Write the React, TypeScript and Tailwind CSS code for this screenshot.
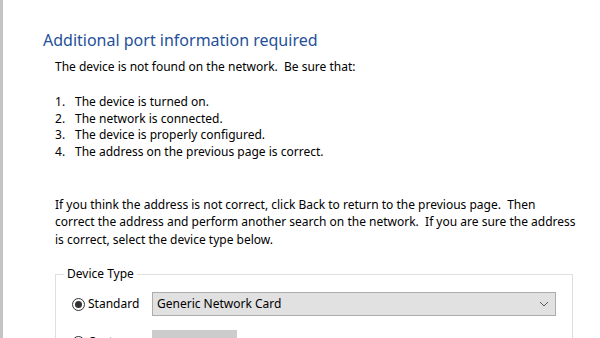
const items = [
  "The device is turned on.",
  "The network is connected.",
  "The device is properly configured.",
  "The address on the previous page is correct.",
];

export default function App() {
  return (
    <div className="flex w-[600px] h-[338px] overflow-hidden bg-white font-['Noto_Sans',sans-serif] text-[12px] text-black">
      <div className="w-[3px] shrink-0 bg-[#c4c4c4]" />
      <div className="flex-1 pl-[40px] pr-[24px]">
        <h1 className="mt-[29px] text-[16px] leading-[22px] text-[#245099]">
          Additional port information required
        </h1>

        <div className="ml-[12px]">
          <p className="mt-[7px] leading-[17px]">
            The device is not found on the network.&nbsp; Be sure that:
          </p>

          <ol className="mt-[19px] leading-[16.7px]">
            {items.map((t, i) => (
              <li key={t} className="flex">
                <span className="w-[20px]">{i + 1}.</span>
                <span>{t}</span>
              </li>
            ))}
          </ol>

          <p className="mt-[35px] leading-[17.5px]">
            If you think the address is not correct, click Back to return to the previous page.&nbsp; Then
            correct the address and perform another search on the network.&nbsp; If you are sure the address
            is correct, select the device type below.
          </p>

          <fieldset className="mt-[18px] w-[518px] border border-[#dfdfdf] pl-[16px] pr-[16px] pt-[10px] pb-[20px]">
            <legend className="ml-[-8px] px-[3px] text-[12px] leading-[16px]">Device Type</legend>
            <div className="flex items-center">
              <label className="flex w-[80px] items-center gap-[3px]">
                <span className="flex h-[13px] w-[13px] items-center justify-center rounded-full border border-[#333]">
                  <span className="h-[7px] w-[7px] rounded-full bg-[#333]" />
                </span>
                <span>Standard</span>
              </label>
              <div className="flex h-[24px] flex-1 items-center justify-between border border-[#adadad] bg-[#e1e1e1] pl-[4px] pr-[6px]">
                <span>Generic Network Card</span>
                <svg width="10" height="6" viewBox="0 0 10 6" fill="none" stroke="#555" strokeWidth="1">
                  <path d="M1 1l4 4 4-4" />
                </svg>
              </div>
            </div>
            <div className="mt-[14px] flex items-center">
              <label className="flex w-[80px] items-center gap-[3px]">
                <span className="h-[13px] w-[13px] rounded-full border border-[#333]" />
                <span>Custom</span>
              </label>
              <div className="h-[24px] w-[85px] border border-[#cccccc] bg-[#cccccc]" />
            </div>
          </fieldset>
        </div>
      </div>
    </div>
  );
}
